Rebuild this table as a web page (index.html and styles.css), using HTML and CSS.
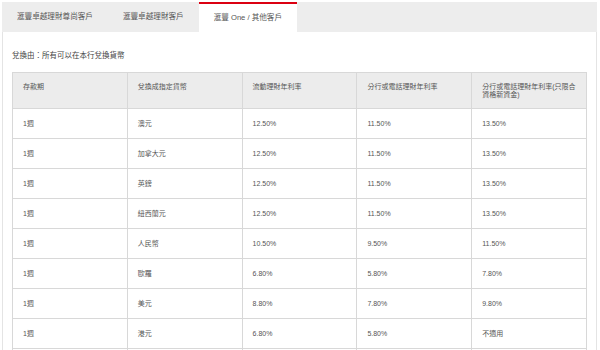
FILE: index.html
```html
<!DOCTYPE html>
<html lang="zh-Hant">
<head>
<meta charset="utf-8">
<link rel="stylesheet" href="styles.css">
</head>
<body>
<div class="wrap">
  <div class="tabs">
    <div class="tab">滙豐卓越理財尊尚客戶</div>
    <div class="tab">滙豐卓越理財客戶</div>
    <div class="tab active">滙豐 One / 其他客戶</div>
  </div>
  <div class="panel">
    <p class="intro">兌換由：所有可以在本行兌換貨幣</p>
    <table class="rates">
      <thead>
        <tr>
          <th>存款期</th>
          <th>兌換成指定貨幣</th>
          <th>流動理財年利率</th>
          <th>分行或電話理財年利率</th>
          <th>分行或電話理財年利率(只限合資格新資金)</th>
        </tr>
      </thead>
      <tbody>
        <tr><td>1週</td><td>澳元</td><td class="num">12.50%</td><td class="num">11.50%</td><td class="num">13.50%</td></tr>
        <tr><td>1週</td><td>加拿大元</td><td class="num">12.50%</td><td class="num">11.50%</td><td class="num">13.50%</td></tr>
        <tr><td>1週</td><td>英鎊</td><td class="num">12.50%</td><td class="num">11.50%</td><td class="num">13.50%</td></tr>
        <tr><td>1週</td><td>紐西蘭元</td><td class="num">12.50%</td><td class="num">11.50%</td><td class="num">13.50%</td></tr>
        <tr><td>1週</td><td>人民幣</td><td class="num">10.50%</td><td class="num">9.50%</td><td class="num">11.50%</td></tr>
        <tr><td>1週</td><td>歐羅</td><td class="num">6.80%</td><td class="num">5.80%</td><td class="num">7.80%</td></tr>
        <tr><td>1週</td><td>美元</td><td class="num">8.80%</td><td class="num">7.80%</td><td class="num">9.80%</td></tr>
        <tr><td>1週</td><td>港元</td><td class="num">6.80%</td><td class="num">5.80%</td><td>不適用</td></tr>
        <tr class="more"><td>&nbsp;</td><td>&nbsp;</td><td>&nbsp;</td><td>&nbsp;</td><td>&nbsp;</td></tr>
      </tbody>
    </table>
  </div>
</div>
</body>
</html>
```

FILE: styles.css
```css
html, body {
  margin: 0;
  padding: 0;
  background: #ffffff;
  overflow: hidden;
}

body {
  font-family: "Liberation Sans", "Noto Sans CJK TC", sans-serif;
  color: #555555;
}

.wrap {
  margin: 2px 3px 0 2px;
}

.tabs {
  display: flex;
  background: #ededed;
  height: 30px;
}

.tab {
  padding: 0 15px;
  font-size: 7.6px;
  line-height: 30px;
  color: #555555;
  white-space: nowrap;
}

.tab.active {
  background: #ffffff;
  border-top: 2px solid #db0011;
  line-height: 28px;
}

.panel {
  border-left: 1px solid #e4e4e4;
  border-right: 1px solid #e4e4e4;
  padding: 20px 9px 0 9px;
}

.intro {
  margin: 0 0 12px 0;
  font-size: 7.5px;
  line-height: 8px;
  color: #444444;
}

.rates {
  width: 575px;
  table-layout: fixed;
  border-collapse: collapse;
  font-size: 7px;
}

.rates th,
.rates td {
  border: 1px solid #d8d8d8;
  padding: 10px 10px;
  text-align: left;
  font-weight: normal;
}

.rates th {
  background: #ececec;
  vertical-align: top;
  line-height: 8px;
  padding: 10px 10px 9px 10px;
  height: 16px;
  color: #555555;
}

.rates td {
  line-height: 9px;
  height: 9px;
  vertical-align: middle;
  color: #555555;
}
```
